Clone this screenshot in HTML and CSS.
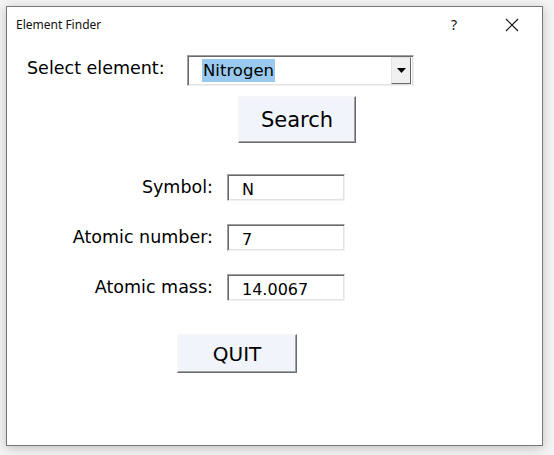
FILE: index.html
```html
<!DOCTYPE html>
<html>
<head>
<meta charset="utf-8">
<link rel="stylesheet" href="styles.css">
</head>
<body>
<div class="window">
  <div class="titlebar">
    <span class="title">Element Finder</span>
    <span class="help">?</span>
    <span class="close">
      <svg width="14" height="14" viewBox="0 0 14 14"><path d="M1 1 L13 13 M13 1 L1 13" stroke="#111" stroke-width="1.1" fill="none"/></svg>
    </span>
  </div>
  <div class="form">
    <div class="row-select">
      <span class="lbl-select">Select element:</span>
      <div class="combo">
        <span class="combo-text"><span class="sel">Nitrogen</span></span>
        <span class="drop">
          <svg width="9" height="5" viewBox="0 0 9 5"><path d="M0 0 H9 L4.5 5 Z" fill="#000"/></svg>
        </span>
      </div>
    </div>
    <div class="btn btn-search">Search</div>
    <div class="fields">
      <span class="lbl">Symbol:</span>
      <span class="box">N</span>
      <span class="lbl">Atomic number:</span>
      <span class="box">7</span>
      <span class="lbl">Atomic mass:</span>
      <span class="box">14.0067</span>
    </div>
    <div class="btn btn-quit">QUIT</div>
  </div>
</div>
</body>
</html>
```
FILE: styles.css
```css
html, body {
  margin: 0;
  padding: 0;
}
body {
  background: #f4f4f4;
  width: 554px;
  height: 455px;
  overflow: hidden;
  padding-top: 6px;
  padding-left: 6px;
  box-sizing: border-box;
}
.window {
  width: 537px;
  height: 440px;
  box-sizing: border-box;
  background: #fff;
  border: 1px solid #777;
  box-shadow: 0 2px 10px rgba(0,0,0,0.22);
}
.titlebar {
  height: 33px;
  display: flex;
  align-items: center;
  padding-left: 9px;
  font-family: "Noto Sans", "Open Sans", sans-serif;
  font-size: 12px;
  color: #111;
}
.title {
  flex: 1;
  padding-top: 2px;
}
.help {
  width: 12px;
  text-align: center;
  font-size: 14px;
  margin-right: 45px;
  padding-top: 2px;
}
.close {
  display: flex;
  width: 14px;
  margin-right: 23px;
  padding-top: 2px;
}
.form {
  font-family: "DejaVu Sans", sans-serif;
  color: #000;
}
.row-select {
  display: flex;
  align-items: center;
  margin-top: 15px;
}
.lbl-select {
  width: 160px;
  padding-left: 20px;
  font-size: 17.5px;
  padding-bottom: 6px;
}
.combo {
  width: 227px;
  height: 31px;
  box-sizing: border-box;
  display: flex;
  align-items: center;
  border: 1px solid;
  border-color: #a0a0a0 #f0f0f0 #f0f0f0 #a0a0a0;
  box-shadow: inset 1px 1px 0 #696969, inset -1px -1px 0 #e3e3e3;
  padding: 2px;
}
.combo-text {
  flex: 1;
  padding-left: 12px;
  font-size: 16.5px;
}
.sel {
  background: #99c9ef;
  padding: 2px 1px 2px 1px;
}
.drop {
  width: 20px;
  height: 27px;
  box-sizing: border-box;
  background: #f0f0f0;
  border: 1px solid;
  border-color: #e3e3e3 #696969 #696969 #e3e3e3;
  display: flex;
  align-items: center;
  justify-content: center;
}
.btn {
  box-sizing: border-box;
  background: #f1f5fb;
  border: 1px solid;
  border-color: #f7f7f7 #6a6a6a #6a6a6a #f7f7f7;
  box-shadow: inset -1px -1px 0 #a0a0a0;
  display: flex;
  align-items: center;
  justify-content: center;
  color: #000;
}
.btn-search {
  width: 118px;
  height: 47px;
  margin-top: 10px;
  margin-left: 231px;
  font-size: 21px;
}
.fields {
  display: grid;
  grid-template-columns: 206px 118px;
  grid-auto-rows: 27px;
  column-gap: 14px;
  row-gap: 23px;
  margin-top: 31px;
  align-items: center;
}
.lbl {
  text-align: right;
  font-size: 17.5px;
  padding-bottom: 2px;
}
.box {
  height: 27px;
  box-sizing: border-box;
  border: 1px solid;
  border-color: #a0a0a0 #f0f0f0 #f0f0f0 #a0a0a0;
  box-shadow: inset 1px 1px 0 #696969, inset -1px -1px 0 #e3e3e3;
  font-size: 16px;
  padding-left: 14px;
  display: flex;
  align-items: center;
  padding-top: 4px;
}
.btn-quit {
  width: 120px;
  height: 39px;
  margin-top: 33px;
  margin-left: 170px;
  font-size: 20px;
}
```
